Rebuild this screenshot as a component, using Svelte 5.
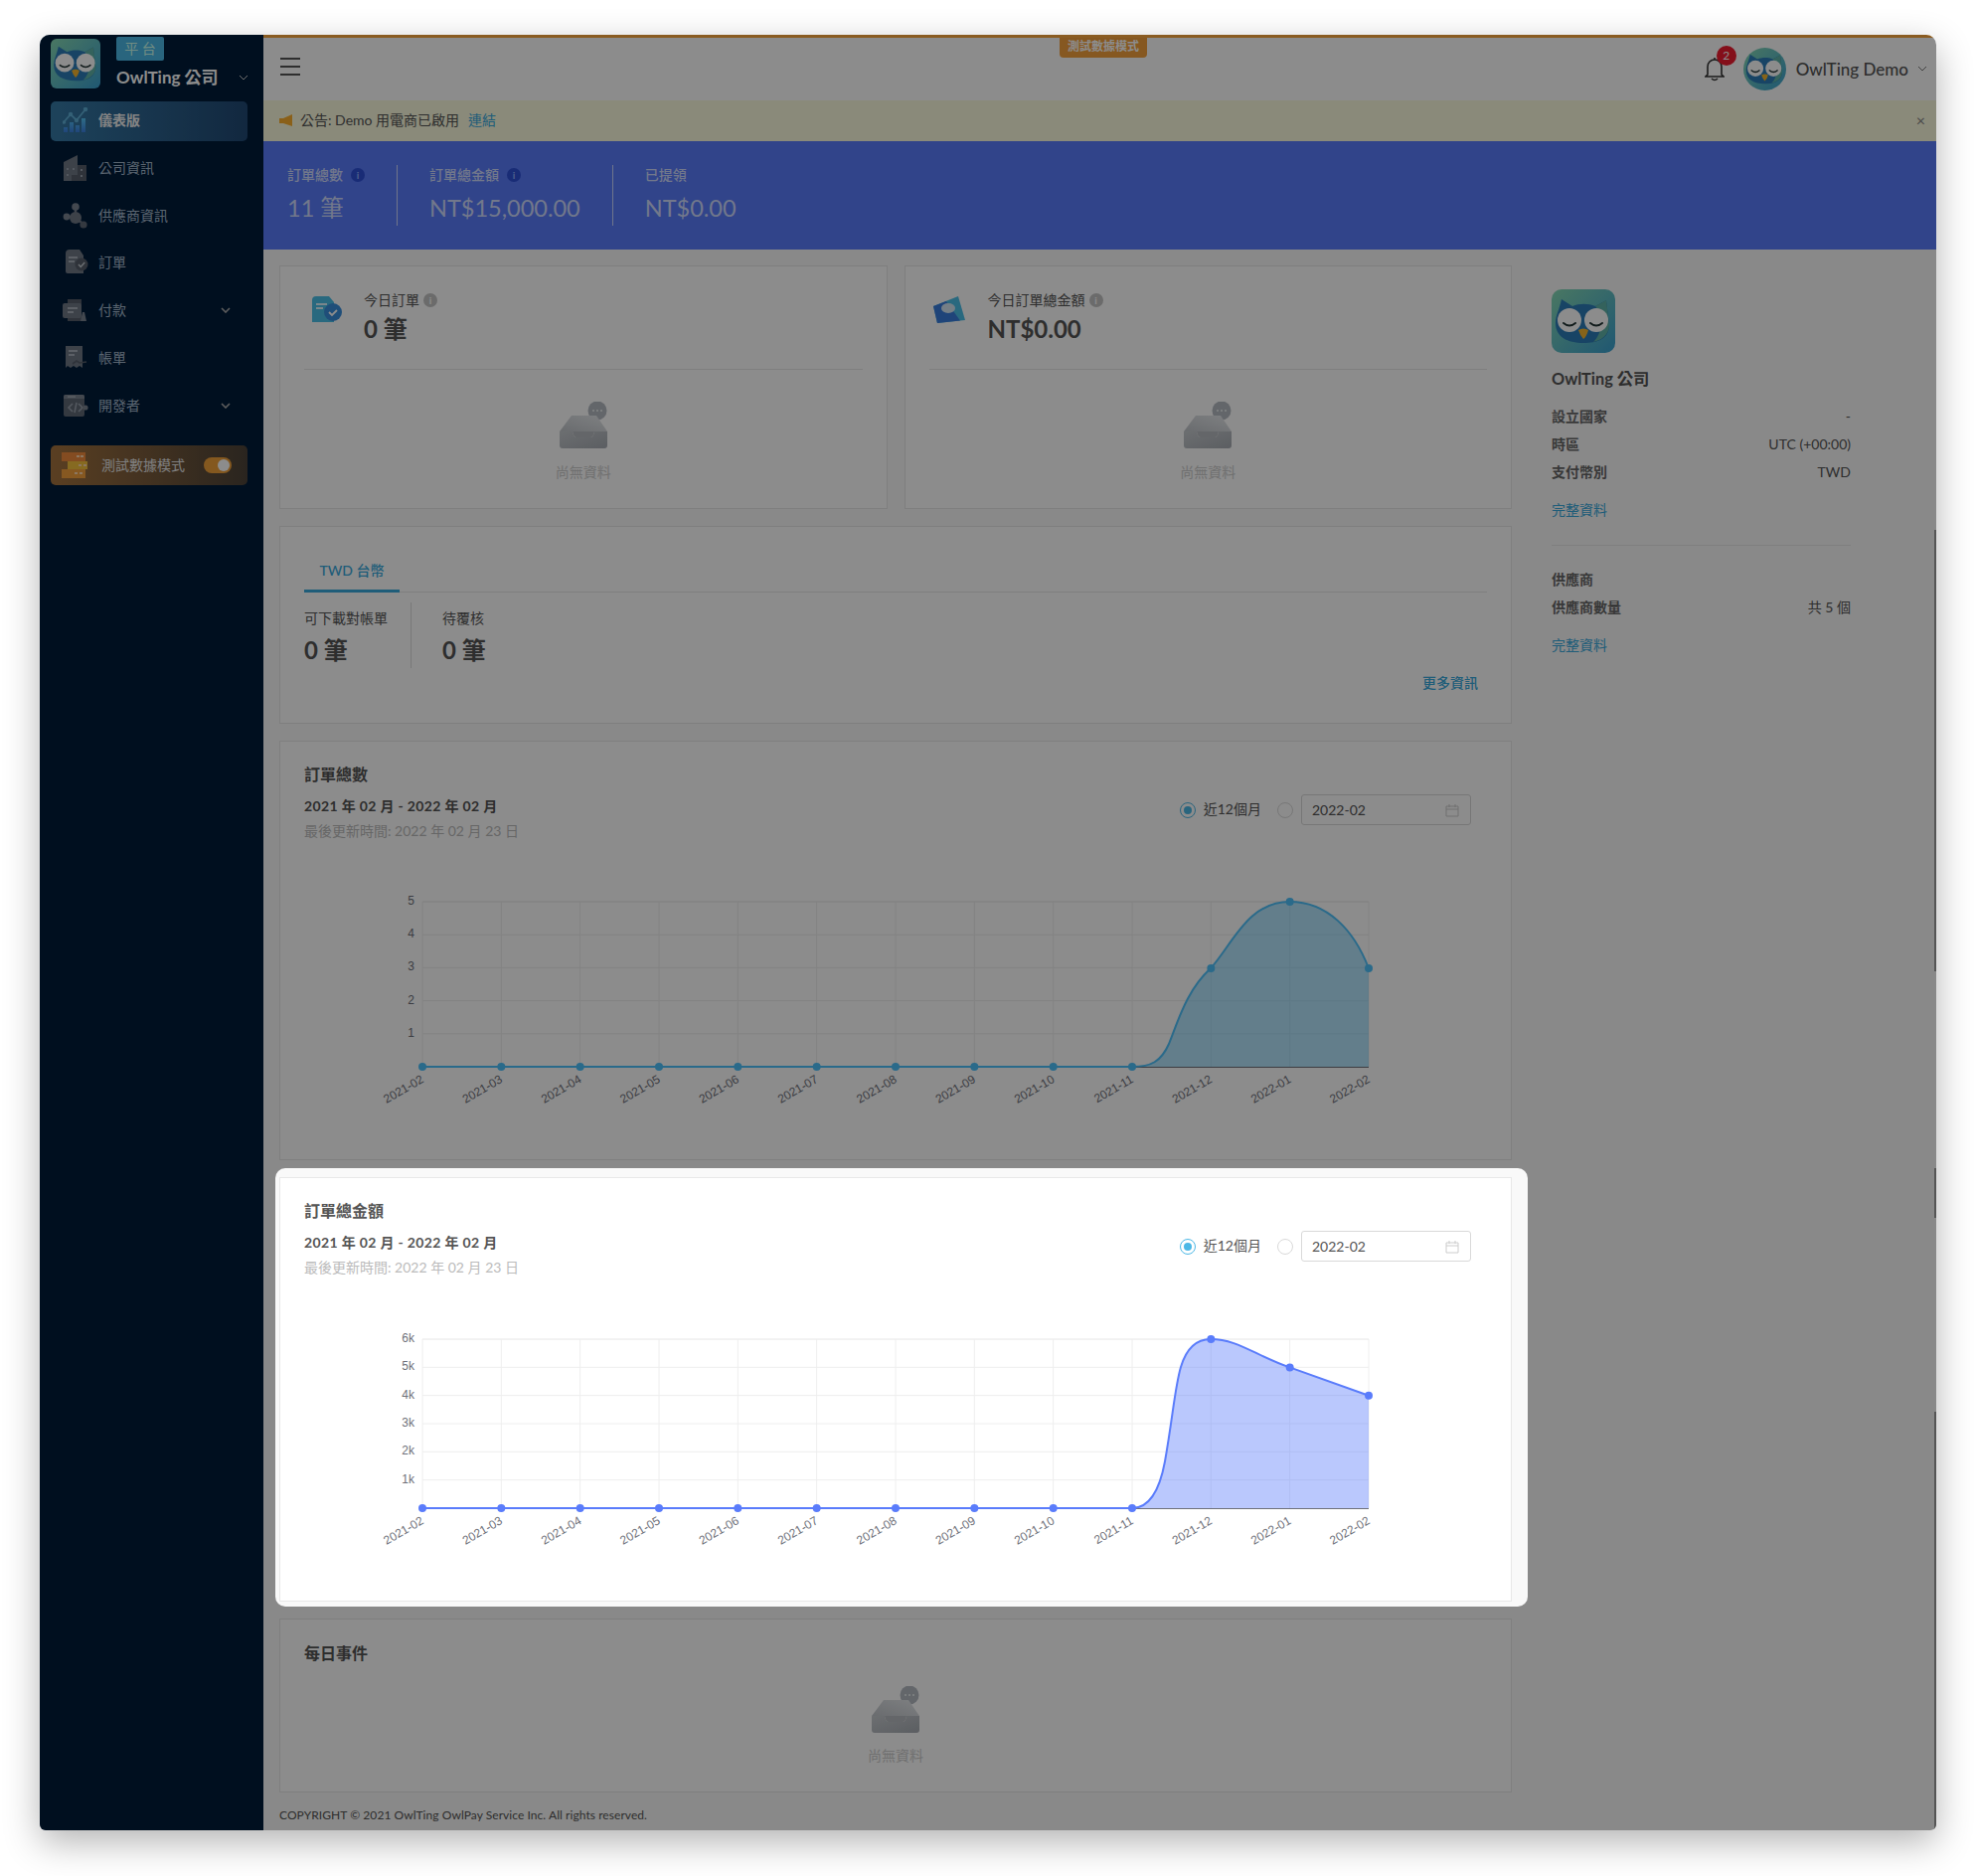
<script>
  const nav = [
    { label: '儀表版', icon: 'chart', active: true },
    { label: '公司資訊', icon: 'building' },
    { label: '供應商資訊', icon: 'nodes' },
    { label: '訂單', icon: 'doc' },
    { label: '付款', icon: 'pay', caret: true },
    { label: '帳單', icon: 'bill' },
    { label: '開發者', icon: 'dev', caret: true }
  ];

  const months = [
    '2021-02', '2021-03', '2021-04', '2021-05', '2021-06', '2021-07', '2021-08',
    '2021-09', '2021-10', '2021-11', '2021-12', '2022-01', '2022-02'
  ];

  const plotLeft = 425;
  const plotRight = 1377;
  const stepX = (plotRight - plotLeft) / 12;
  const xAt = (i) => plotLeft + i * stepX;

  // svg viewBox uses page coordinates so the numbers read like the chart itself
  const charts = [
    {
      title: '訂單總數',
      top: 907,
      bottom: 1073,
      ticks: ['1', '2', '3', '4', '5'],
      color: '#4dc1fb',
      values: [null, null, null, null, null, null, null, null, null, null, 974, 907, 974],
      curve: 'C1158 1073 1168 1068 1176 1050 C1186 1025 1194 996 1218 974 C1240 950 1255 907 1297.6 907 C1335 907 1362 935 1377 974',
      boxTop: 861,
      cls: 'chart-card'
    },
    {
      title: '訂單總金額',
      top: 1347,
      bottom: 1517,
      ticks: ['1k', '2k', '3k', '4k', '5k', '6k'],
      color: '#5a7cfb',
      values: [null, null, null, null, null, null, null, null, null, null, 1347, 1375.4, 1403.8],
      curve: 'C1158 1517 1167 1497 1172 1470 C1180 1425 1182 1395 1188 1375 C1194 1355 1204 1347 1218 1347 C1245 1347 1262 1363 1297.5 1375.4 L1377 1403.8',
      boxTop: 1300,
      cls: 'chart-card tall'
    }
  ];

  const areaPath = (c) =>
    `M${xAt(0)} ${c.bottom} L${xAt(9)} ${c.bottom} ${c.curve} L${plotRight} ${c.bottom} Z`;
  const linePath = (c) => `M${xAt(0)} ${c.bottom} L${xAt(9)} ${c.bottom} ${c.curve}`;

  const tickY = (c, i) => c.bottom - ((i + 1) * (c.bottom - c.top)) / c.ticks.length;
</script>

{#snippet owl()}
  <svg viewBox="0 0 64 64" class="owl">
    <defs>
      <linearGradient id="owlbg" x1="0" y1="0" x2="1" y2="1">
        <stop offset="0" stop-color="#86d9b4" />
        <stop offset="1" stop-color="#3aa0d0" />
      </linearGradient>
    </defs>
    <rect width="64" height="64" fill="url(#owlbg)" />
    <path d="M10 10 L21 17 C28 14 37 14 44 17 L55 11 L58 36 C58 50 46 54 32 54 C16 54 4 48 4 34 C4 26 8 20 10 10Z" fill="#2c7db8" />
    <path d="M44 17 L55 11 L58 36 C58 46 50 51 42 53 C52 44 52 26 44 17Z" fill="#5fb3a8" />
    <circle cx="18" cy="31" r="12" fill="#fff" />
    <circle cx="45" cy="31" r="12" fill="#fff" />
    <path d="M12 34 Q18 39 24 34" fill="none" stroke="#233" stroke-width="2" stroke-linecap="round" />
    <path d="M39 34 Q45 39 51 34" fill="none" stroke="#233" stroke-width="2" stroke-linecap="round" />
    <path d="M27 41 Q32 38 37 41 Q35 48 32 50 Q29 47 27 41Z" fill="#f5b52e" />
  </svg>
{/snippet}

{#snippet navIcon(name)}
  <svg viewBox="0 0 26 26" class="nav-icon">
    {#if name === 'chart'}
      <defs>
        <linearGradient id="bluebars" x1="0" y1="0" x2="0" y2="1">
          <stop offset="0" stop-color="#55c5f5" />
          <stop offset="1" stop-color="#3b7fe0" />
        </linearGradient>
      </defs>
      <path d="M1 15 L8 7 L14 13 L23 2" fill="none" stroke="#5fb0d8" stroke-width="1.8" />
      <circle cx="8" cy="7" r="2.2" fill="#5fb0d8" />
      <circle cx="14" cy="13" r="2.2" fill="#5fb0d8" />
      <circle cx="23" cy="2" r="2.2" fill="#5fb0d8" />
      <circle cx="1.5" cy="15" r="1.8" fill="#5fb0d8" />
      <path d="M1 25V20H5V25ZM7 25V15H11V25ZM13 25V18H17V25ZM19 25V11H23V25Z" fill="url(#bluebars)" />
    {:else if name === 'building'}
      <path d="M1 7 L15 0 V26 H1Z" fill="#6f7885" />
      <path d="M15 10H24V26H9V20H15Z" fill="#565e6a" />
      <path d="M4 13h2v2H4zM10 13h2v2h-2zM4 19h2v2H4zM18 14h2v2h-2zM18 20h2v2h-2z" fill="#98a1ad" />
    {:else if name === 'nodes'}
      <path d="M13 4V14L5 14M13 14L21 22" stroke="#6f7885" stroke-width="2.4" fill="none" />
      <circle cx="13" cy="4" r="3.8" fill="#7a8390" />
      <circle cx="13" cy="15" r="6" fill="#6f7885" />
      <circle cx="4" cy="14" r="3.4" fill="#7a8390" />
      <circle cx="21" cy="22" r="3.6" fill="#606875" />
    {:else if name === 'doc'}
      <path d="M7 0H17L21 6V24H5Q3 24 3 22V4Q3 0 7 0Z" fill="#6f7885" />
      <path d="M6 7h9v2H6zM6 11h6v2H6z" fill="#a8b0ba" />
      <circle cx="19" cy="15" r="6.5" fill="#565e6a" />
      <path d="M16 15l2.2 2.4 4-4.4" stroke="#c3c9d0" stroke-width="1.5" fill="none" />
    {:else if name === 'pay'}
      <path d="M5 2H19V24H5Z" fill="#565e6a" />
      <rect x="0" y="6" width="19" height="15" rx="2" fill="#6f7885" />
      <path d="M5 10h10v2H5zM5 14h6v2H5z" fill="#a8b0ba" />
      <path d="M18 24 L20 15 H22 L24 24Z" fill="#7a8390" />
    {:else if name === 'bill'}
      <path d="M3 1H20V23L17 21 14 23 11 21 8 23 5 21 3 23Z" fill="#6f7885" />
      <path d="M6 5h9v2H6zM6 9h6v2H6z" fill="#a8b0ba" />
      <path d="M10 19 L14 16 17 18 24 17" stroke="#565e6a" stroke-width="1.6" fill="none" />
    {:else}
      <rect x="1" y="2" width="21" height="22" rx="2" fill="#606875" />
      <path d="M1 4Q1 2 3 2H20Q22 2 22 4V6H1Z" fill="#7a8390" />
      <path d="M5 3.4h8v1.4H5z" fill="#a8b0ba" />
      <path d="M10 11 L6 15 10 19M14 10 L12 20M16 11 L20 15 16 19" stroke="#98a1ad" stroke-width="1.6" fill="none" />
      <circle cx="23" cy="15" r="2.6" fill="#7a8390" />
    {/if}
  </svg>
{/snippet}

{#snippet info(cls)}
  <span class="info {cls}">i</span>
{/snippet}

{#snippet empty()}
  <div class="empty">
    <svg viewBox="0 0 48 47" width="48" height="47">
      <defs>
        <linearGradient id="tray" x1="0" y1="1" x2="1" y2="0">
          <stop offset="0" stop-color="#c0c4c9" />
          <stop offset="1" stop-color="#e6e9ec" />
        </linearGradient>
        <linearGradient id="trayfront" x1="0" y1="0" x2="1" y2="1">
          <stop offset="0" stop-color="#c6cace" />
          <stop offset="1" stop-color="#a6abb2" />
        </linearGradient>
      </defs>
      <circle cx="38" cy="9" r="9.5" fill="#b4bac2" />
      <path d="M30 14 L30 19 L35 17Z" fill="#b4bac2" />
      <circle cx="34" cy="9" r="1" fill="#eef0f2" />
      <circle cx="38" cy="9" r="1" fill="#eef0f2" />
      <circle cx="42" cy="9" r="1" fill="#eef0f2" />
      <path d="M12 14 H37 L48 30 H0Z" fill="url(#tray)" />
      <path d="M0 30 H13 Q14 36 17 36 H31 Q34 36 35 30 H48 V44 Q48 47 45 47 H3 Q0 47 0 44Z" fill="url(#trayfront)" />
      <path d="M13 30 Q14 36 17 36 H31 Q34 36 35 30Z" fill="#b6babf" />
    </svg>
    <span>尚無資料</span>
  </div>
{/snippet}

{#snippet radios()}
  <div class="range-pick">
    <span class="radio on"></span>
    <span class="radio-label">近12個月</span>
    <span class="radio"></span>
    <div class="month-input">
      <span>2022-02</span>
      <svg viewBox="0 0 14 14" width="14" height="14">
        <path d="M1 3h12v10H1zM1 6h12M4 1v3M10 1v3" fill="none" stroke="#ccc" stroke-width="1" />
      </svg>
    </div>
  </div>
{/snippet}

{#snippet chartCard(c)}
  <section class={c.cls}>
    <div class="chart-head">
      <div>
        <h3>{c.title}</h3>
        <p class="range">2021 年 02 月 - 2022 年 02 月</p>
        <p class="updated">最後更新時間: 2022 年 02 月 23 日</p>
      </div>
      {@render radios()}
    </div>
    <svg class="chart" width="1190" height="280" viewBox="306 {c.boxTop} 1190 280">
      {#each c.ticks as t, i}
        <line x1={plotLeft} x2={plotRight} y1={tickY(c, i)} y2={tickY(c, i)} stroke="#eee" />
        <text x={plotLeft - 8} y={tickY(c, i) + 3} text-anchor="end" class="tick">{t}</text>
      {/each}
      <line x1={plotLeft} x2={plotRight} y1={c.top} y2={c.top} stroke="#eee" />
      {#each months as m, i}
        <line x1={xAt(i)} x2={xAt(i)} y1={c.top} y2={c.bottom} stroke="#eee" />
        <text
          class="tick"
          text-anchor="end"
          transform="translate({xAt(i) + 2} {c.bottom + 15}) rotate(-30)">{m}</text>
      {/each}
      <path d={areaPath(c)} fill={c.color} opacity="0.42" />
      <line x1={plotLeft} x2={plotRight} y1={c.bottom + 0.5} y2={c.bottom + 0.5} stroke="#6e7079" />
      <path d={linePath(c)} fill="none" stroke={c.color} stroke-width="2" />
      {#each months as m, i}
        <circle cx={xAt(i)} cy={c.values[i] ?? c.bottom} r="4" fill={c.color} />
      {/each}
    </svg>
  </section>
{/snippet}

<div class="shot">
  <div class="window">
    <aside class="sidebar">
      <div class="brand">
        <div class="brand-logo">{@render owl()}</div>
        <div class="brand-text">
          <span class="brand-tag">平 台</span>
          <span class="brand-name">OwlTing 公司</span>
        </div>
        <svg class="caret brand-caret" viewBox="0 0 10 6" width="10" height="6"><path d="M1 1l4 4 4-4" /></svg>
      </div>

      <nav>
        {#each nav as item}
          <div class="nav-row" class:active={item.active}>
            {@render navIcon(item.icon)}
            <span>{item.label}</span>
            {#if item.caret}
              <svg class="caret nav-caret" viewBox="0 0 10 6" width="10" height="6"><path d="M1 1l4 4 4-4" /></svg>
            {/if}
          </div>
        {/each}
      </nav>

      <div class="test-mode">
        <svg viewBox="0 0 26 26" width="26" height="26">
          <rect x="0" y="0" width="24" height="9" fill="#f08a3c" />
          <rect x="6" y="9" width="20" height="8" fill="#f5c23c" />
          <rect x="0" y="17" width="24" height="9" fill="#f5a03c" />
          <path d="M15 3h3v2h-3zM19 3h3v2h-3zM17 12h3v2h-3zM22 12h3v2h-3zM13 20h3v2h-3zM18 20h3v2h-3z" fill="#ffd9b0" />
        </svg>
        <span>測試數據模式</span>
        <div class="toggle"><i></i></div>
      </div>
    </aside>

    <div class="main">
      <header class="topbar">
        <div class="hamburger"><i></i><i></i><i></i></div>
        <div class="test-tag">測試數據模式</div>
        <div class="user">
          <div class="bell">
            <svg viewBox="0 0 20 26" width="20" height="26">
              <path d="M3 19V11C3 7 6 4 10 4C14 4 17 7 17 11V19L19 21H1ZM10 4V2M7 23Q10 26 13 23" fill="none" stroke="#333" stroke-width="1.6" />
            </svg>
            <span class="badge">2</span>
          </div>
          <div class="avatar">{@render owl()}</div>
          <span class="user-name">OwlTing Demo</span>
          <svg class="caret" viewBox="0 0 10 6" width="10" height="6"><path d="M1 1l4 4 4-4" /></svg>
        </div>
      </header>

      <div class="notice">
        <svg viewBox="0 0 14 12" width="14" height="12"><path d="M0 4H4L13 0V12L4 9H0Z" fill="#fbb02e" /></svg>
        <span class="notice-text">公告: Demo 用電商已啟用</span>
        <a href="#top">連結</a>
        <span class="notice-close">×</span>
      </div>

      <div class="totals">
        <div class="total">
          <div class="total-label">訂單總數 {@render info('blue')}</div>
          <div class="total-value">11 筆</div>
        </div>
        <div class="total">
          <div class="total-label">訂單總金額 {@render info('blue')}</div>
          <div class="total-value">NT$15,000.00</div>
        </div>
        <div class="total">
          <div class="total-label">已提領</div>
          <div class="total-value">NT$0.00</div>
        </div>
      </div>

      <div class="content">
        <div class="left">
          <div class="today-row">
            <section class="today">
              <div class="today-head">
                <svg viewBox="0 0 30 26" width="30" height="26">
                  <path d="M4 0H17L22 6V26H0V4Q0 0 4 0Z" fill="#4cc0e8" />
                  <path d="M4 7h11v2H4zM4 11h7v2H4z" fill="#dff6ff" />
                  <circle cx="21" cy="16" r="9" fill="#3a8fdc" />
                  <path d="M17 16l3 3 5-5" stroke="#fff" stroke-width="1.8" fill="none" />
                </svg>
                <div class="today-text">
                  <div class="today-label">今日訂單 {@render info('gray')}</div>
                  <div class="today-value">0 筆</div>
                </div>
              </div>
              {@render empty()}
            </section>
            <section class="today">
              <div class="today-head money">
                <svg viewBox="0 0 32 28" width="32" height="28">
                  <path d="M0 10 L25 0 L32 24 L4 27Z" fill="#4cc0e8" />
                  <path d="M0 10 L13 5 L27 24.5 L4 27Z" fill="#3a7cdc" />
                  <ellipse cx="15" cy="12" rx="7" ry="5" fill="#d5e8f5" />
                </svg>
                <div class="today-text">
                  <div class="today-label">今日訂單總金額 {@render info('gray')}</div>
                  <div class="today-value">NT$0.00</div>
                </div>
              </div>
              {@render empty()}
            </section>
          </div>

          <section class="tabs-card">
            <div class="tabs"><span class="tab">TWD 台幣</span></div>
            <div class="tab-stats">
              <div class="tab-stat">
                <div class="tab-label">可下載對帳單</div>
                <div class="tab-value">0 筆</div>
              </div>
              <div class="tab-stat">
                <div class="tab-label">待覆核</div>
                <div class="tab-value">0 筆</div>
              </div>
            </div>
            <a class="more" href="#top">更多資訊</a>
          </section>

          {@render chartCard(charts[0])}
          {@render chartCard(charts[1])}

          <section class="daily">
            <h3>每日事件</h3>
            {@render empty()}
          </section>

          <footer>COPYRIGHT © 2021 OwlTing OwlPay Service Inc. All rights reserved.</footer>
        </div>

        <aside class="company">
          <div class="company-logo">{@render owl()}</div>
          <h4>OwlTing 公司</h4>
          <dl>
            <div><dt>設立國家</dt><dd>-</dd></div>
            <div><dt>時區</dt><dd>UTC (+00:00)</dd></div>
            <div><dt>支付幣別</dt><dd>TWD</dd></div>
          </dl>
          <a href="#top">完整資料</a>
          <hr />
          <div class="vendor-title">供應商</div>
          <dl>
            <div><dt>供應商數量</dt><dd>共 5 個</dd></div>
          </dl>
          <a href="#top">完整資料</a>
        </aside>
      </div>
    </div>

    <!-- tour spotlight: the dim over the whole window is this element's shadow -->
    <div class="spotlight"></div>
    <i class="edge e1"></i><i class="edge e2"></i><i class="edge e3"></i>
  </div>
</div>

<style>
  :global(body) {
    background: #fff;
    font-family: Lato, "Noto Sans CJK TC", sans-serif;
    color: #555;
  }
  .shot {
    width: 1988px;
    height: 1887px;
    padding: 35px 40px 0;
    box-sizing: border-box;
    overflow: hidden;
  }
  .window {
    position: relative;
    display: flex;
    width: 1908px;
    height: 1806px;
    overflow: hidden;
    border-radius: 10px 10px 6px 6px;
    background: #f9f9f9;
    box-shadow: 0 12px 36px rgba(0, 0, 0, 0.3);
  }
  h3, h4, p, dl, dd { margin: 0; }
  a { color: #3aa9dc; text-decoration: none; }
  .spotlight {
    position: absolute;
    left: 237px;
    top: 1140px;
    width: 1260px;
    height: 441px;
    border-radius: 10px;
    box-shadow: 0 0 0 3000px rgba(0, 0, 0, 0.45);
    z-index: 5;
  }
  .edge {
    position: absolute;
    right: 0;
    width: 2px;
    background: #555;
    z-index: 6;
  }
  .e1 { top: 498px; height: 444px; }
  .e2 { top: 1140px; height: 50px; }
  .e3 { top: 1385px; height: 421px; }

  /* sidebar */
  .sidebar {
    flex: 0 0 225px;
    background: #001c3a;
    padding: 4px 16px 0 11px;
    box-sizing: border-box;
  }
  .brand {
    display: flex;
    height: 63px;
    position: relative;
  }
  .brand-logo {
    width: 50px;
    height: 50px;
    border-radius: 6px;
    overflow: hidden;
  }
  .owl { display: block; width: 100%; height: 100%; }
  .brand-text {
    display: flex;
    flex-direction: column;
    margin-left: 16px;
    margin-top: -2px;
  }
  .brand-tag {
    width: 48px;
    height: 24px;
    line-height: 24px;
    text-align: center;
    font-size: 14px;
    color: #cfe;
    background: #4cb8e6;
    border-radius: 2px;
  }
  .brand-name {
    margin-top: 3px;
    font-size: 17px;
    font-weight: 700;
    color: #fff;
    white-space: nowrap;
  }
  .caret {
    fill: none;
    stroke: #777;
    stroke-width: 1;
  }
  .brand-caret {
    position: absolute;
    right: -1px;
    top: 36px;
    stroke: #ccc;
  }
  .nav-row {
    display: flex;
    align-items: center;
    height: 40px;
    box-sizing: border-box;
    margin-bottom: 7.8px;
    padding: 0 0 2px 12px;
    border-radius: 5px;
    font-size: 14px;
    color: #a5b8cc;
    position: relative;
  }
  .nav-row span { margin-bottom: 2px; }
  .nav-row.active {
    background: linear-gradient(90deg, #367aa6 0%, #214974 100%);
    color: #f0f0f0;
    font-weight: 700;
  }
  .nav-icon {
    width: 26px;
    height: 26px;
    margin-right: 10px;
    flex: none;
  }
  .nav-caret {
    position: absolute;
    right: 17px;
    stroke: #aaa;
    stroke-width: 1.6;
  }
  .test-mode {
    display: flex;
    align-items: center;
    height: 40px;
    margin-top: 19px;
    padding: 0 16px 0 11px;
    border-radius: 5px;
    background: linear-gradient(90deg, #a4733e 0%, #4d4339 100%);
    color: #e6e6e6;
    font-size: 14px;
  }
  .test-mode span { margin-left: 14px; margin-bottom: 2px; }
  .toggle {
    position: relative;
    margin-left: auto;
    width: 28px;
    height: 16px;
    border-radius: 8px;
    background: #f0a03a;
  }
  .toggle i {
    position: absolute;
    right: 2px;
    top: 2px;
    width: 12px;
    height: 12px;
    border-radius: 50%;
    background: #fff;
  }

  /* top */
  .main {
    flex: 1;
    min-width: 0;
    display: flex;
    flex-direction: column;
  }
  .topbar {
    position: relative;
    display: flex;
    align-items: center;
    height: 66px;
    box-sizing: border-box;
    padding: 3px 9px 0 17px;
    background: #fff;
    border-top: 3px solid #fba83e;
  }
  .hamburger {
    display: flex;
    flex-direction: column;
    gap: 6px;
    width: 20px;
    margin-top: -9px;
  }
  .hamburger i { height: 2px; background: #555; }
  .test-tag {
    position: absolute;
    left: 801px;
    top: 0;
    width: 88px;
    height: 20px;
    line-height: 17px;
    text-align: center;
    font-size: 12px;
    font-weight: 700;
    color: #fff;
    background: #f5a03c;
    border-radius: 0 0 4px 4px;
  }
  .user {
    display: flex;
    align-items: center;
    margin-left: auto;
    margin-top: -4px;
  }
  .bell { position: relative; width: 20px; height: 26px; margin-right: 19px; }
  .badge {
    position: absolute;
    left: 12px;
    top: -10px;
    width: 20px;
    height: 20px;
    line-height: 20px;
    text-align: center;
    border-radius: 50%;
    background: #f01c30;
    color: #fff;
    font-size: 12px;
  }
  .avatar {
    width: 43px;
    height: 43px;
    border-radius: 50%;
    overflow: hidden;
  }
  .user-name {
    margin: 0 9px 0 10px;
    font-size: 17px;
    font-weight: 500;
    color: #555;
  }
  .notice {
    display: flex;
    align-items: center;
    height: 41px;
    padding: 0 11px 3px 16px;
    box-sizing: border-box;
    background: #fbfbde;
    font-size: 14px;
    color: #555;
  }
  .notice svg { margin-right: 7px; margin-top: 2px; }
  .notice-text { margin-right: 9px; }
  .notice-close { margin-left: auto; color: #888; font-size: 16px; }

  .totals {
    display: flex;
    height: 109px;
    padding-top: 24px;
    box-sizing: border-box;
    background: #597cfb;
    color: rgba(255, 255, 255, 0.72);
  }
  .total {
    height: 61px;
    padding: 0 32px;
    border-left: 1px solid rgba(255, 255, 255, 0.7);
  }
  .total:first-child {
    width: 134px;
    box-sizing: border-box;
    padding: 0 0 0 24px;
    border-left: 0;
  }
  .total-label {
    font-size: 14px;
    font-weight: 500;
    line-height: 20px;
    display: flex;
    align-items: center;
    gap: 8px;
  }
  .total-value {
    margin-top: 5px;
    font-size: 23.5px;
    line-height: 36px;
    white-space: nowrap;
  }
  .info {
    display: inline-block;
    width: 14px;
    height: 14px;
    line-height: 14px;
    border-radius: 50%;
    text-align: center;
    font-size: 10px;
    font-weight: 700;
    color: #fff;
  }
  .info.blue { background: #2f50d8; color: #8fb0ff; }
  .info.gray { background: #c4c4c4; }

  /* content */
  .content {
    display: flex;
    align-items: flex-start;
    padding: 16px 0 0 16px;
    flex: 1;
  }
  .left {
    width: 1240px;
    flex: none;
  }
  section {
    background: #fff;
    border: 1px solid #e8e8e8;
    box-sizing: border-box;
    margin-bottom: 17px;
  }
  .today-row {
    display: flex;
    gap: 17px;
  }
  .today {
    width: 612px;
    height: 245px;
    padding: 0 24px;
  }
  .today-head {
    display: flex;
    height: 104px;
    padding: 30px 0 0 8px;
    box-sizing: border-box;
    border-bottom: 1px solid #e8e8e8;
  }
  .today-head.money { padding-left: 4px; }
  .today-text { margin-left: 22px; margin-top: -6px; }
  .today-head.money .today-text { margin-left: 23px; }
  .today-label {
    font-size: 14px;
    line-height: 20px;
    color: #555;
    display: flex;
    align-items: center;
    gap: 4px;
  }
  .today-value {
    margin-top: 2.5px;
    font-size: 24px;
    line-height: 32px;
    font-weight: 700;
    color: #555;
  }
  .empty {
    display: flex;
    flex-direction: column;
    align-items: center;
  }
  .today .empty { margin-top: 32px; }
  .empty span {
    margin-top: 14px;
    font-size: 14px;
    line-height: 20px;
    color: #ccc;
  }

  .tabs-card {
    position: relative;
    height: 199px;
    padding: 0 24px;
  }
  .tabs {
    height: 65px;
    border-bottom: 1px solid #e8e8e8;
    display: flex;
    align-items: flex-end;
  }
  .tab {
    width: 96px;
    height: 43px;
    margin-bottom: -1px;
    line-height: 41px;
    text-align: center;
    box-sizing: border-box;
    border-bottom: 3px solid #3aa9dc;
    color: #3aa9dc;
    font-size: 14px;
    font-weight: 500;
  }
  .tab-stats { display: flex; margin-top: 10px; }
  .tab-stat { height: 66px; padding-right: 24px; }
  .tab-stat:first-child {
    width: 108px;
    box-sizing: border-box;
    padding-right: 0;
    border-right: 1px solid #ddd;
    margin-right: 31px;
  }
  .tab-label {
    margin-top: 6px;
    font-size: 14px;
    line-height: 20px;
    color: #555;
    white-space: nowrap;
  }
  .tab-value {
    margin-top: 6px;
    font-size: 24px;
    line-height: 32px;
    font-weight: 700;
    color: #555;
  }
  .more {
    position: absolute;
    right: 33px;
    bottom: 31px;
    font-size: 14px;
    font-weight: 500;
  }

  .chart-card {
    position: relative;
    height: 422px;
    padding: 0 24px;
  }
  .chart-card.tall { height: 427px; }
  .chart-head {
    display: flex;
    justify-content: space-between;
    height: 115px;
    padding-top: 22px;
    box-sizing: border-box;
  }
  h3 {
    font-size: 16px;
    font-weight: 700;
    line-height: 22px;
    color: #555;
  }
  .range {
    margin-top: 11px;
    font-size: 14px;
    line-height: 20px;
    font-weight: 700;
    color: #555;
    letter-spacing: 0.35px;
  }
  .updated {
    margin-top: 4.5px;
    font-size: 14px;
    line-height: 20px;
    color: #bbb;
  }
  .range-pick {
    display: flex;
    align-items: center;
    height: 31px;
    margin: 31px 16px 0 0;
  }
  .radio {
    width: 16px;
    height: 16px;
    box-sizing: border-box;
    border: 1px solid #d9d9d9;
    border-radius: 50%;
    background: #fff;
    position: relative;
  }
  .radio.on { border-color: #4cb8e6; }
  .radio.on::after {
    content: "";
    position: absolute;
    inset: 3px;
    border-radius: 50%;
    background: #4cb8e6;
  }
  .radio-label {
    margin: 0 16px 2px 8px;
    font-size: 14px;
    line-height: 16px;
    color: #555;
  }
  .month-input {
    display: flex;
    align-items: center;
    justify-content: space-between;
    width: 171px;
    height: 31px;
    box-sizing: border-box;
    margin-left: 8px;
    padding: 0 11px 0 10px;
    border: 1px solid #d9d9d9;
    border-radius: 3px;
    font-size: 14px;
    color: #555;
  }
  .chart { display: block; }
  .tick {
    font-family: "Liberation Sans", sans-serif;
    font-size: 12px;
    fill: #6e7079;
  }

  .daily {
    height: 175px;
    padding: 0 24px;
    margin-bottom: 0;
  }
  .daily h3 { margin-top: 23px; }
  .daily .empty { margin-top: 22px; }
  .daily .empty span { margin-top: 13px; }
  footer {
    margin-top: 14px;
    font-size: 12px;
    line-height: 18px;
    color: #555;
    letter-spacing: 0.06px;
  }

  /* right column */
  .company {
    width: 301px;
    margin-left: 40px;
    padding-top: 24px;
    font-size: 14px;
  }
  .company-logo {
    width: 64px;
    height: 64px;
    border-radius: 10px;
    overflow: hidden;
  }
  h4 {
    margin-top: 14px;
    font-size: 16.3px;
    font-weight: 700;
    line-height: 24px;
    color: #555;
  }
  dl div {
    display: flex;
    justify-content: space-between;
    height: 28px;
    line-height: 28px;
  }
  dl { margin-top: 12px; }
  dt { font-weight: 700; color: #666; }
  dd { color: #555; }
  .company a { display: block; margin-top: 10px; line-height: 28px; }
  hr {
    border: 0;
    border-top: 1px solid #e8e8e8;
    margin: 21px 0 20px;
  }
  .vendor-title { line-height: 28px; font-weight: 700; color: #666; }
  .vendor-title + dl { margin-top: 0; }
</style>
